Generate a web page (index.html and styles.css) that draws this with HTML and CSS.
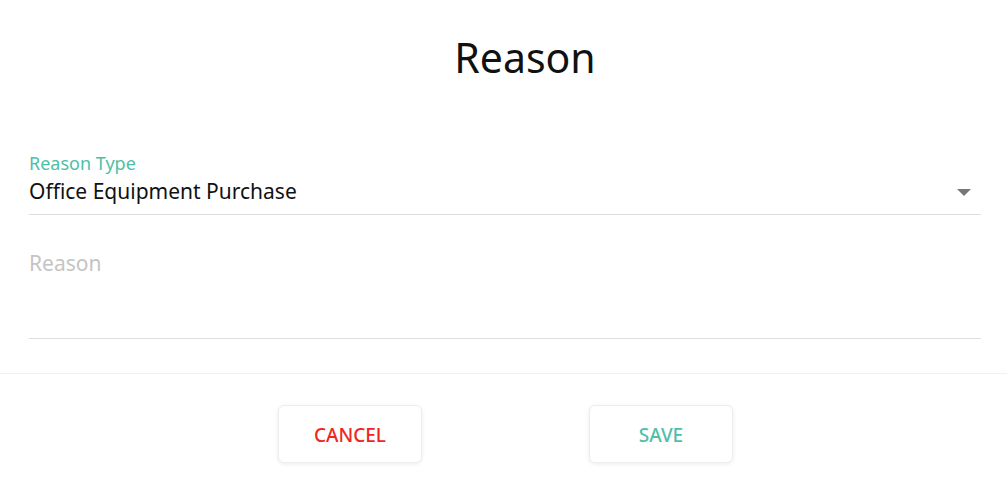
FILE: index.html
```html
<html>
	<head>
		<link rel="stylesheet" href="styles.css">
	</head>
	<body>
		<div class="dialog">
			<h1 class="title">Reason</h1>
			<div class="form">
				<div class="field select">
					<div class="label">Reason Type</div>
					<div class="value">Office Equipment Purchase</div>
					<span class="arrow"></span>
				</div>
				<div class="field textarea">
					<div class="placeholder">Reason</div>
				</div>
			</div>
			<div class="actions">
				<button class="btn cancel">CANCEL</button>
				<button class="btn save">SAVE</button>
			</div>
		</div>
	</body>
</html>
```

FILE: styles.css
```css
* {
	margin: 0;
	padding: 0;
	box-sizing: border-box;
}

body {
	background: #fff;
	font-family: "Noto Sans", sans-serif;
	color: #111;
}

.title {
	font-weight: normal;
	font-size: 41px;
	line-height: 48px;
	text-align: center;
	padding: 33px 0 0 43px;
	height: 150px;
}

.form {
	padding: 0 26px 0 29px;
}

.field {
	position: relative;
	border-bottom: 1px solid #dedede;
}

.select {
	height: 64px;
}

.label {
	color: #4fbea8;
	font-size: 18px;
	line-height: 24px;
	margin-top: 1px;
}

.value {
	font-size: 21px;
	line-height: 30px;
	margin-top: 1px;
}

.arrow {
	position: absolute;
	right: 10px;
	top: 38px;
	border-left: 7px solid transparent;
	border-right: 7px solid transparent;
	border-top: 7px solid #777;
}

.textarea {
	height: 124px;
	padding-top: 35px;
}

.placeholder {
	color: #c4c4c4;
	font-size: 21px;
	line-height: 26px;
}

.actions {
	margin-top: 34px;
	border-top: 1px solid #f1f1f1;
	display: flex;
	justify-content: center;
	gap: 167px;
	padding-top: 31px;
	padding-left: 4px;
}

.btn {
	width: 144px;
	height: 58px;
	padding-top: 2px;
	background: #fff;
	border: 1px solid #eee;
	border-radius: 6px;
	box-shadow: 0 1px 4px rgba(0, 0, 0, 0.08);
	font-family: "Noto Sans", sans-serif;
	font-size: 19px;
	font-weight: 500;
	cursor: pointer;
}

.cancel {
	color: #f0261d;
}

.save {
	color: #4fbea8;
}
```
